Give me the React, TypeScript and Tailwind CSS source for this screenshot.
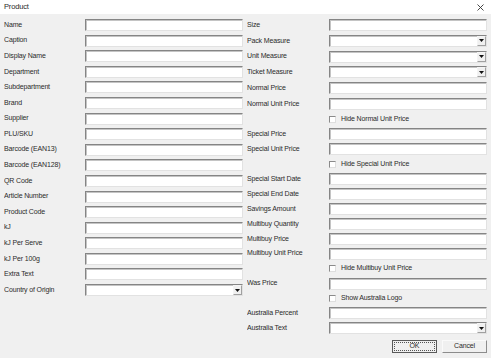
import React from 'react';

type FieldProps = { label: string; combo?: boolean; h: string; lw: string };

const Input = ({ combo }: { combo?: boolean }) => (
  <div className="flex h-[12px] w-[158px] border border-t-[#858585] border-l-[#858585] border-r-[#e2e2e2] border-b-[#e2e2e2] bg-white shadow-[inset_1px_1px_0_#c4c4c4]">
    <div className="flex-1" />
    {combo && (
      <div className="flex w-[9px] items-center justify-center border border-t-[#f4f4f4] border-l-[#f4f4f4] border-r-[#a0a0a0] border-b-[#a0a0a0] bg-[#f0f0f0]">
        <svg width="5" height="3" viewBox="0 0 5 3">
          <path d="M0 0 H5 L2.5 3 Z" fill="#111" />
        </svg>
      </div>
    )}
  </div>
);

const Field = ({ label, combo, h, lw }: FieldProps) => (
  <div className={`flex items-center ${h}`}>
    <span className={`${lw} truncate`}>{label}</span>
    <Input combo={combo} />
  </div>
);

const Check = ({ label, h }: { label: string; h: string }) => (
  <div className={`flex items-center pl-[82px] ${h}`}>
    <div className="h-[7px] w-[7px] border border-t-[#8a8a8a] border-l-[#8a8a8a] border-r-[#dedede] border-b-[#dedede] bg-white" />
    <span className="ml-[5px]">{label}</span>
  </div>
);

const leftFields: Array<{ label: string; combo?: boolean }> = [
  { label: 'Name' },
  { label: 'Caption' },
  { label: 'Display Name' },
  { label: 'Department' },
  { label: 'Subdepartment' },
  { label: 'Brand' },
  { label: 'Supplier' },
  { label: 'PLU/SKU' },
  { label: 'Barcode (EAN13)' },
  { label: 'Barcode (EAN128)' },
  { label: 'QR Code' },
  { label: 'Article Number' },
  { label: 'Product Code' },
  { label: 'kJ' },
  { label: 'kJ Per Serve' },
  { label: 'kJ Per 100g' },
  { label: 'Extra Text' },
  { label: 'Country of Origin', combo: true },
];

export default function App() {
  return (
    <div className="flex h-[358px] w-[491px] flex-col overflow-hidden bg-[#f0f0f0] text-[7px] tracking-[-0.15px] text-[#2b2b2b] [font-family:'Liberation_Sans',Arial,sans-serif]">
      <div className="flex h-[14px] items-center justify-between bg-white pl-[4px] pr-[7px]">
        <span className="text-[7.5px]">Product</span>
        <svg width="7" height="7" viewBox="0 0 7 7">
          <path d="M0.5 0.5 L6.5 6.5 M6.5 0.5 L0.5 6.5" stroke="#333" strokeWidth="0.9" />
        </svg>
      </div>

      <div className="flex gap-[4px] pl-[4px] pt-[3.2px]">
        <div className="flex flex-col">
          {leftFields.map((f) => (
            <Field key={f.label} label={f.label} combo={f.combo} h="h-[15.6px]" lw="w-[81px]" />
          ))}
        </div>

        <div className="flex flex-col">
          <Field label="Size" h="h-[15.8px]" lw="w-[82px]" />
          <Field label="Pack Measure" combo h="h-[15.8px]" lw="w-[82px]" />
          <Field label="Unit Measure" combo h="h-[15.8px]" lw="w-[82px]" />
          <Field label="Ticket Measure" combo h="h-[15.8px]" lw="w-[82px]" />
          <Field label="Normal Price" h="h-[15.8px]" lw="w-[82px]" />
          <Field label="Normal Unit Price" h="h-[15.8px]" lw="w-[82px]" />
          <Check label="Hide Normal Unit Price" h="h-[14.93px]" />
          <Field label="Special Price" h="h-[14.93px]" lw="w-[82px]" />
          <Field label="Special Unit Price" h="h-[14.93px]" lw="w-[82px]" />
          <Check label="Hide Special Unit Price" h="h-[14.93px]" />
          <Field label="Special Start Date" h="h-[14.93px]" lw="w-[82px]" />
          <Field label="Special End Date" h="h-[14.93px]" lw="w-[82px]" />
          <Field label="Savings Amount" h="h-[14.93px]" lw="w-[82px]" />
          <Field label="Multibuy Quantity" h="h-[14.93px]" lw="w-[82px]" />
          <Field label="Multibuy Price" h="h-[14.93px]" lw="w-[82px]" />
          <Field label="Multibuy Unit Price" h="h-[14.93px]" lw="w-[82px]" />
          <Check label="Hide Multibuy Unit Price" h="h-[14.93px]" />
          <Field label="Was Price" h="h-[14.93px]" lw="w-[82px]" />
          <Check label="Show Australia Logo" h="h-[14.93px]" />
          <Field label="Australia Percent" h="h-[14.93px]" lw="w-[82px]" />
          <Field label="Australia Text" combo h="h-[14.93px]" lw="w-[82px]" />

          <div className="mt-[4px] flex justify-end gap-[5px]">
            <button className="flex h-[13px] w-[45px] items-center justify-center border border-[#5a5a5a] bg-[#f0f0f0] outline-1 -outline-offset-3 outline-[#555] outline-dotted">
              OK
            </button>
            <button className="flex h-[13px] w-[45px] items-center justify-center border border-t-[#fafafa] border-l-[#fafafa] border-r-[#8c8c8c] border-b-[#8c8c8c] bg-[#f0f0f0]">
              Cancel
            </button>
          </div>
        </div>
      </div>
    </div>
  );
}
